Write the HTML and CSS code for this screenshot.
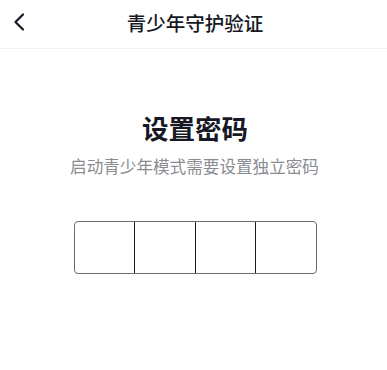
FILE: index.html
```html
<!DOCTYPE html>
<html lang="zh-CN">
<head>
<meta charset="utf-8">
<title>青少年守护验证</title>
<link rel="stylesheet" href="styles.css">
</head>
<body>
<div class="page">
  <header class="nav">
    <span class="back">
      <svg width="12" height="18" viewBox="0 0 12 18"><path d="M10 1.5 L2.5 9 L10 16.5" fill="none" stroke="#161823" stroke-width="2.2" stroke-linecap="round" stroke-linejoin="round"/></svg>
    </span>
    <h1 class="nav-title">青少年守护验证</h1>
  </header>
  <main class="content">
    <h2 class="heading">设置密码</h2>
    <p class="sub">启动青少年模式需要设置独立密码</p>
    <div class="code">
      <div class="cell"></div>
      <div class="cell"></div>
      <div class="cell"></div>
      <div class="cell last"></div>
    </div>
  </main>
</div>
</body>
</html>
```
FILE: styles.css
```css
html, body {
  margin: 0;
  padding: 0;
  background: #fff;
}
body {
  font-family: "Noto Sans CJK SC", "Noto Sans", sans-serif;
  color: #161823;
}
.page {
  width: 387px;
  height: 370px;
  overflow: hidden;
}
.nav {
  position: relative;
  height: 48px;
  border-bottom: 1px solid #f1f1f2;
  display: flex;
  align-items: center;
  justify-content: center;
}
.back {
  position: absolute;
  left: 13px;
  top: 13px;
  width: 12px;
  height: 18px;
  display: flex;
}
.nav-title {
  margin: 0;
  padding-bottom: 3px;
  padding-left: 3px;
  font-size: 19.5px;
  font-weight: 500;
  line-height: 45px;
}
.content {
  display: flex;
  flex-direction: column;
  align-items: center;
}
.heading {
  margin: 61px 0 0 3px;
  font-size: 26.5px;
  font-weight: 700;
  line-height: 36px;
}
.sub {
  margin: 9px 0 0 2px;
  font-size: 16.6px;
  line-height: 22px;
  color: #8a8b91;
}
.code {
  margin: 44px 0 0 3px;
  display: flex;
  width: 241px;
  height: 51px;
  border: 1px solid #6b6b70;
  border-radius: 4px;
}
.cell {
  flex: 1;
  border-right: 1px solid #161823;
}
.cell.last {
  border-right: none;
}
```
